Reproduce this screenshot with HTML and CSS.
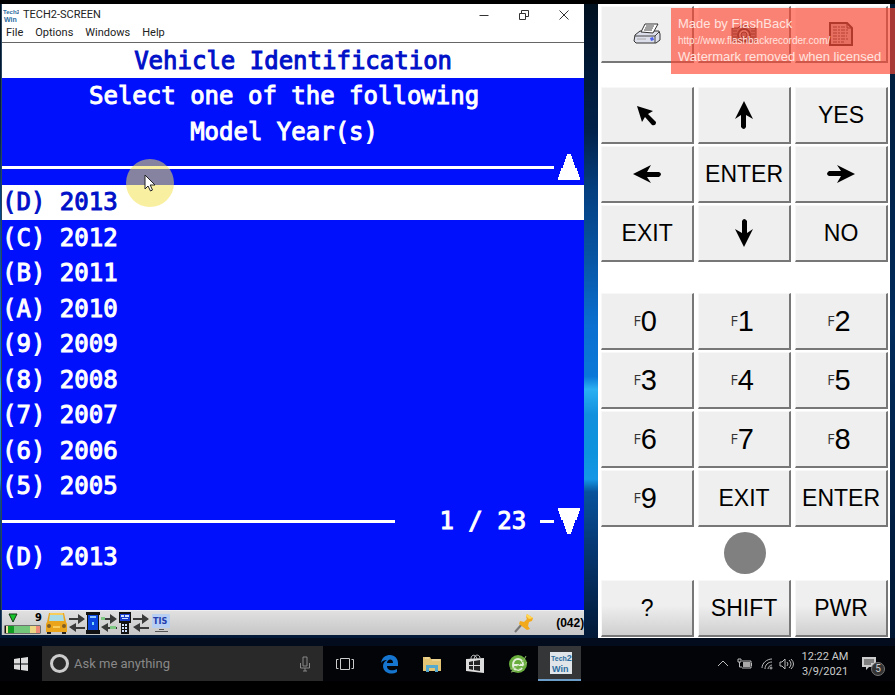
FILE: index.html
```html
<!DOCTYPE html>
<html lang="en">
<head>
<meta charset="utf-8">
<title>TECH2-SCREEN</title>
<link rel="stylesheet" href="styles.css">
</head>
<body>
<main class="desktop">
  <section class="window" aria-label="TECH2-SCREEN">
    <header class="titlebar">
      <svg class="app-icon" viewBox="0 0 16 16" aria-hidden="true"><g class="logo-text"><text x="0" y="7" font-size="6">Tech2</text><text x="1" y="15" font-size="7">Win</text></g></svg>
      <h1>TECH2-SCREEN</h1>
      <div class="window-controls">
        <button type="button" aria-label="Minimize"><svg viewBox="0 0 12 12"><path d="M1.500 6.500h9"/></svg></button>
        <button type="button" aria-label="Restore"><svg viewBox="0 0 12 12"><path d="M1.500 4.500h6v6h-6zM3.500 4v-2.500h7v6h-3"/></svg></button>
        <button type="button" aria-label="Close"><svg viewBox="0 0 12 12"><path d="M1.500 1.500l9 9M10.500 1.500l-9 9"/></svg></button>
      </div>
    </header>
    <nav class="menubar">
      <button type="button">File</button><button type="button">Options</button><button type="button">Windows</button><button type="button">Help</button>
    </nav>
    <div class="screen">
      <h2 class="row heading">Vehicle Identification</h2>
      <p class="row prompt">Select one of the following</p>
      <p class="row prompt">Model Year(s)</p>
      <div class="row rule">
        <span class="line"></span>
        <button type="button" class="scroll" aria-label="Scroll up"><svg viewBox="0 0 22 26"><path d="M9 0h4v2h1v3h1v3h1v3h1v3h2v3h1v3h1v3h1v3H0v-3h1v-3h1v-3h1v-3h2v-3h1V8h1V5h1V2h1z"/></svg></button>
      </div>
      <button type="button" class="row item selected">(D) 2013</button>
      <button type="button" class="row item">(C) 2012</button>
      <button type="button" class="row item">(B) 2011</button>
      <button type="button" class="row item">(A) 2010</button>
      <button type="button" class="row item">(9) 2009</button>
      <button type="button" class="row item">(8) 2008</button>
      <button type="button" class="row item">(7) 2007</button>
      <button type="button" class="row item">(6) 2006</button>
      <button type="button" class="row item">(5) 2005</button>
      <div class="row rule">
        <span class="line"></span>
        <span class="count">1 / 23</span>
        <span class="dash"></span>
        <button type="button" class="scroll" aria-label="Scroll down"><svg viewBox="0 0 22 26"><path d="M0 0h22v3h-1v3h-1v3h-1v3h-2v3h-1v3h-1v3h-1v3h-1v2H9v-2H8v-3H7v-3H6v-3H5v-3H3V9H2V6H1V3H0z"/></svg></button>
      </div>
      <p class="row item">(D) 2013</p>
      <div class="row"></div>
      <div class="spotlight" aria-hidden="true"><svg viewBox="0 0 12 18"><path d="M1 1v14l3-3 2.500 5 2-1-2.300-5H11z"/></svg></div>
    </div>
    <footer class="status">
      <svg class="meter" viewBox="0 0 38 22" aria-hidden="true">
        <path d="M5 2h8l-4 8z" fill="#16c52c" stroke="#123816"/>
        <text x="31" y="9" font-size="11" font-weight="bold">9</text>
        <path d="M.5 13.500h36v8H.5z" fill="#111"/><path d="M2 14h2v7H2z" fill="#efe4a0"/><path d="M4 14h6v7H4z" fill="#0f9d22"/><path d="M10 14h16v7H10z" fill="#73c77b"/><path d="M26 14h6v7h-6z" fill="#ecd685"/><path d="M32 14h4v7h-4z" fill="#ef8a78"/>
      </svg>
      <svg class="links" viewBox="0 0 126 22" aria-hidden="true">
        <path d="M2 19h4v3H2zM17 19h4v3h-4z" fill="#222"/>
        <path d="M4 1h15l2 9 1 2v8H1v-8l1-2z" fill="#eaa51c"/><path d="M5 2h13l1 7H4z" fill="#a8dbe5"/><path d="M5 1h13v2H5z" fill="#f8cc59"/><circle cx="4" cy="14" r="2" fill="#7e5d26"/><circle cx="19" cy="14" r="2" fill="#7e5d26"/><path d="M8 14h7v2H8z" fill="#f8cd5b"/>
        <path d="M24 6h9V2l7 5-7 5V8h-9zM40 15h-9v-4l-7 4 7 5v-3h9zM56 6h9V2l7 5-7 5V8h-9zM72 15h-9v-4l-7 4 7 5v-3h9zM88 6h9V2l7 5-7 5V8h-9zM104 15h-9v-4l-7 4 7 5v-3h9z" fill="#3a3a3a"/>
        <path d="M56 5h4v3h-4zM65 14h6v3h-6z" fill="#7fc883"/>
        <path d="M41 0h14v3h-1v15h1v4H41v-4h1V3h-1z" fill="#111"/><path d="M43 3h10v15H43z" fill="#0a45df"/><path d="M45 4h6v2h-6z" fill="#8bc4ff"/><path d="M47 10h2v3h-2z" fill="#7bdbff"/>
        <path d="M74 0h12v11h-2v11h-8V11h-2z" fill="#111"/><path d="M75 2h10v7H75z" fill="#183cce"/><path d="M76 3h3v2h-3zM80 3h4v2h-4zM77 6h6v1h-6zM77 12h2v2h-2zM80 12h2v2h-2zM77 15h2v2h-2zM80 15h2v2h-2zM77 18h2v2h-2zM80 18h2v2h-2z" fill="#cfe0ff"/>
        <rect x="107" y="2" width="18" height="14" rx="1" fill="#b8cff4"/><text x="108" y="12" font-size="9" font-weight="bold" fill="#233dac">TIS</text><path d="M114 17h5v1h-5zM110 19h13v1h-13z" fill="#555"/>
      </svg>
      <svg class="pin" viewBox="0 0 20 20" aria-hidden="true"><path d="M1 19l7-8" stroke="#777" stroke-width="2"/><path d="M13 1l6 4-1 3-3 1-1 4 2 3-3 1-8-6 1-3 4 1 3-3-1-2z" fill="#f3a91c"/><path d="M13 1l6 4-4 1-3-3z" fill="#ffd858"/></svg>
      <span class="code">(042)</span>
    </footer>
  </section>

  <section class="keypad" aria-label="Keypad">
    <div class="keys">
      <button type="button" aria-label="Print"><svg class="tool" viewBox="0 0 28 24"><path d="M2 13l5-4h19l1 3v6l-4 3H3l-2-2z" fill="#dcdfea" stroke="#333"/><path d="M2 14h20l4-4M22 14v7" fill="none" stroke="#444"/><path d="M8 10l4-8h13l-5 9z" fill="#fff" stroke="#333"/><path d="M13 4h8M12 6h8M11 8h8" stroke="#444"/><path d="M4 17h9" stroke="#aaa"/><path d="M17 16l3-1 1 3-3 1z" fill="#4a60ee"/></svg></button>
      <button type="button" aria-label="Capture"><svg class="tool" viewBox="0 0 28 24"><path d="M2 6h6l3-3h7l3 3h5v14H2z" fill="#888" stroke="#222"/><circle cx="14" cy="13" r="6" fill="#bbb" stroke="#222" stroke-width="2"/><circle cx="14" cy="13" r="3" fill="#777" stroke="#222"/><path d="M3 9h4M21 9h4M3 12h4M21 12h4M3 15h4M21 15h4" stroke="#222"/></svg></button>
      <button type="button" aria-label="Notes"><svg class="tool" viewBox="0 0 28 24"><path d="M3 1h17l5 5v17H3z" fill="#bbb" stroke="#222" stroke-width="2"/><path d="M20 1v5h5" fill="none" stroke="#222"/><path d="M6 5h12M6 8h15M6 11h15M6 14h14M6 17h15M6 20h11" stroke="#333" stroke-dasharray="4 1 2 1"/></svg></button>
    </div>
    <div class="keys nav-keys">
      <button type="button" aria-label="Back"><svg class="arrow" viewBox="0 0 28 28"><path d="M4 5l16 5-5 3 8 8q0 4-4 3l-7-8-3 5z"/></svg></button>
      <button type="button" aria-label="Up"><svg class="arrow" viewBox="0 0 28 28"><path d="M14 0l9 18-7-4v12q-2 4-5 0V14l-6 4z"/></svg></button>
      <button type="button">YES</button>
      <button type="button" aria-label="Left"><svg class="arrow left" viewBox="0 0 28 28"><path d="M14 0l9 18-7-4v12q-2 4-5 0V14l-6 4z"/></svg></button>
      <button type="button">ENTER</button>
      <button type="button" aria-label="Right"><svg class="arrow right" viewBox="0 0 28 28"><path d="M14 0l9 18-7-4v12q-2 4-5 0V14l-6 4z"/></svg></button>
      <button type="button">EXIT</button>
      <button type="button" aria-label="Down"><svg class="arrow down" viewBox="0 0 28 28"><path d="M14 0l9 18-7-4v12q-2 4-5 0V14l-6 4z"/></svg></button>
      <button type="button">NO</button>
    </div>
    <div class="keys function-keys">
      <button type="button"><small>F</small><b>0</b></button><button type="button"><small>F</small><b>1</b></button><button type="button"><small>F</small><b>2</b></button>
      <button type="button"><small>F</small><b>3</b></button><button type="button"><small>F</small><b>4</b></button><button type="button"><small>F</small><b>5</b></button>
      <button type="button"><small>F</small><b>6</b></button><button type="button"><small>F</small><b>7</b></button><button type="button"><small>F</small><b>8</b></button>
      <button type="button"><small>F</small><b>9</b></button><button type="button">EXIT</button><button type="button">ENTER</button>
    </div>
    <div class="lamp"></div>
    <div class="keys bottom-keys">
      <button type="button">?</button><button type="button">SHIFT</button><button type="button">PWR</button>
    </div>
  </section>
</main>

<footer class="taskbar">
  <button type="button" class="start" aria-label="Start"><svg viewBox="0 0 14 14"><path d="M0 2l6-1v5.500H0zM7 1l7-1v6.500H7zM0 7.500h6V13l-6-1zM7 7.500h7V14l-7-1z" fill="#ddd"/></svg></button>
  <div class="search">
    <span class="ring"></span>
    <input type="text" placeholder="Ask me anything" aria-label="Ask me anything">
    <svg viewBox="0 0 12 16" aria-hidden="true"><path d="M4 1h4v9H4zM1.500 7v5h9V7M6 12v3M4 15h4" fill="none" stroke="#888"/></svg>
  </div>
  <button type="button" class="task" aria-label="Task view"><svg viewBox="0 0 20 20"><path d="M5.500 4.500h9v11h-9zM3.500 5.500h-2v9h2M16.500 5.500h2v9h-2" fill="none" stroke="#ccc"/></svg></button>
  <button type="button" class="task" aria-label="Edge"><svg viewBox="0 0 20 20"><path d="M2 9C3 3 7 1 11 1c5 0 8 4 8 8v3H8c0 5 6 5 10 3v3c-7 4-14 0-14-6 0-3 2-5 4-6-3 0-5 1-6 3zM8 9h6c0-5-6-4-6 0z" fill="#1676cf"/></svg></button>
  <button type="button" class="task" aria-label="File Explorer"><svg viewBox="0 0 20 20"><path d="M1 3h7l1 2h10v12H1z" fill="#e3c475"/><path d="M3 4h4M10 6h8" stroke="#f4e4ad"/><path d="M4 11h12v7h-3v-4H7v4H4z" fill="#54a9ce"/></svg></button>
  <button type="button" class="task" aria-label="Store"><svg viewBox="0 0 20 20"><path d="M1 5l18-1v15L1 17z" fill="#ddd"/><path d="M6 5c0-5 5-5 6 0M9 5c1-6 6-4 6-1" fill="none" stroke="#ccc"/><path d="M4 8l4-1v4H4zM9 7l6-1v5H9zM4 12h4v4l-4-1zM9 12h6v5l-6-1z" fill="#222"/></svg></button>
  <button type="button" class="task" aria-label="Browser"><svg viewBox="0 0 20 20"><circle cx="10" cy="10" r="9" fill="#69ad3e"/><path d="M5 11h10c0-8-10-8-10 0 0 6 7 6 9 3" fill="none" stroke="#e4efdb" stroke-width="2"/><path d="M2 15C7 15 15 9 18 2M3 18c5-1 12-4 16-10" fill="none" stroke="#94c36f"/></svg></button>
  <button type="button" class="task active" aria-label="Tech2Win"><svg viewBox="0 0 22 22"><path d="M0 0h22v22H0z" fill="#dfe5e9"/><g class="logo-text"><text x="1" y="9" font-size="7">Tech<tspan font-size="9">2</tspan></text><text x="2" y="20" font-size="9">Win</text></g></svg></button>
  <div class="tray">
    <svg class="chevron" viewBox="0 0 12 12"><path d="M1 8l5-5 5 5"/></svg>
    <svg class="battery" viewBox="0 0 16 12"><path d="M5 3h9v7H5M14.500 5v3M1 1h3v3H1zM2.500 4v5H5"/><path d="M6 4h7v5H6z" fill="#aaa" stroke="none"/></svg>
    <svg class="wifi" viewBox="0 0 12 12"><path d="M1 10C1 5 6 1 11 1M4 11c0-4 3-7 7-7M7 11c0-2 2-4 4-4"/><circle cx="10" cy="10" r="1"/></svg>
    <svg class="sound" viewBox="0 0 16 12"><path d="M1 4h2l3-3v10L3 8H1zM8 4q2 2 0 4M10 2q4 4 0 8M12 1q5 5 0 10"/></svg>
    <time class="clock">12:22 AM<br>3/9/2021</time>
    <button type="button" class="notices" aria-label="5 notifications"><svg viewBox="0 0 16 16"><path d="M1 1h14v10h-7l-3 3v-3H1z" fill="#ccc"/><path d="M3 4h10M3 6h10M3 8h7" stroke="#333"/></svg><span>5</span></button>
  </div>
</footer>

<aside class="watermark">
  <p>Made by FlashBack</p>
  <p class="address">http://www.flashbackrecorder.com/</p>
  <p>Watermark removed when licensed</p>
</aside>
</body>
</html>
```
FILE: styles.css
```css
* { box-sizing: border-box; }

body {
  position: relative;
  display: flex;
  flex-direction: column;
  min-height: 100vh;
  margin: 0;
  padding: 4px 0 15px;
  background: #000;
  font-family: Roboto, "Noto Sans", sans-serif;
  overflow: hidden;
}

h1, h2, p { margin: 0; font-weight: normal; }

button {
  margin: 0;
  padding: 0;
  border: 0;
  background: none;
  color: inherit;
  font: inherit;
}

svg { display: block; }

.desktop {
  flex: 1;
  display: flex;
  gap: 14px;
  padding: 0 5px 8px 1px;
  background:
    linear-gradient(#020c1c, #020c1c) 0 100% / 100% 8px no-repeat,
    linear-gradient(#00101f 0, #02224c 20%, #043f80 29%, #0756a5 40%, #0a6fd0 50%, #0a78d8 58%, #2bb0f2 60%, #1190dd 64%, #0d93de 70%, #1597e5 74%, #07539c 76%, #063975 84%, #021631 100%) 0 0 / 67% 100% no-repeat,
    linear-gradient(#001a35, #002b5c 50%, #001632);
}

.window {
  display: flex;
  flex-direction: column;
  width: 65.6%;
  margin-bottom: 3px;
  border-left: 1px solid #28435c;
  background: #fff;
}

.titlebar {
  display: flex;
  align-items: center;
  height: 21px;
  padding-left: 1px;
}

.app-icon { width: 16px; height: 16px; }
.logo-text { fill: #2b6c9f; font-family: "Liberation Sans", sans-serif; font-weight: bold; }

.titlebar h1 {
  flex: 1;
  padding-left: 4px;
  font-size: 11px;
  color: #222;
}

.window-controls { display: flex; }
.window-controls button { display: grid; place-items: center; width: 40px; height: 20px; }
.window-controls svg { width: 12px; height: 12px; fill: none; stroke: #333; }

.menubar {
  display: flex;
  gap: 12px;
  height: 18px;
  padding-left: 4px;
  border-bottom: 1px solid #666;
  font-size: 11px;
  line-height: 14px;
  color: #222;
}

.menubar button { height: 16px; }

.screen {
  position: relative;
  flex: 1;
  display: grid;
  grid-template-rows: repeat(16, 1fr);
  background: #0010fc;
  color: #fff;
  font: 24px/32px "DejaVu Sans Mono", monospace;
  -webkit-text-stroke: 1px currentColor;
}

.row { display: flex; align-items: center; white-space: pre; }
.heading { justify-content: center; background: #fff; color: #0010c8; font-size: 24px; }
.prompt { justify-content: center; padding-right: 18px; }
.selected { background: #fff; color: #0010c8; }

.rule { gap: 4px; padding: 0 4px 0 0; }
.rule .line { flex: 1; height: 3px; background: #fff; }
.rule .count { padding: 0 10px 0 40px; }
.rule .dash { width: 14px; height: 3px; background: #fff; }
.scroll svg { width: 22px; height: 26px; fill: #fff; }

.spotlight {
  position: absolute;
  left: 124px;
  top: 116px;
  display: grid;
  place-items: center;
  width: 48px;
  height: 48px;
  border-radius: 50%;
  background: rgba(244, 226, 84, 0.55);
}

.spotlight svg { width: 12px; height: 18px; fill: #fff; stroke: #222; }

.status {
  display: flex;
  align-items: center;
  height: 25px;
  padding-left: 2px;
  border-top: 1px solid #eee;
  background: linear-gradient(#e0e0e0, #c6c6c6);
  font-family: "DejaVu Sans Condensed", sans-serif;
}

.meter { width: 38px; height: 22px; }
.links { width: 126px; height: 22px; margin-left: 3px; }
.pin { width: 20px; height: 20px; margin-left: auto; }
.code { padding-left: 22px; font: bold 12px/20px "Liberation Sans", sans-serif; }

.keypad {
  flex: 1;
  padding: 2px 2px 1px 3px;
  background: #fff;
}

.keys {
  display: grid;
  grid-template-columns: repeat(3, 1fr);
  gap: 2px 4px;
}

.keys button {
  display: flex;
  align-items: center;
  justify-content: center;
  height: 57px;
  border: solid;
  border-width: 1px 2px 2px 1px;
  border-color: #f8f8f8 #777 #777 #f8f8f8;
  background: #efefef;
  color: #000;
  font: 23px/28px "Liberation Sans", sans-serif;
}

.nav-keys { margin-top: 24px; }
.function-keys { margin-top: 31px; }
.keys .tool { width: 28px; height: 24px; }
.arrow { width: 28px; height: 28px; }
.left { transform: rotate(-90deg); }
.right { transform: rotate(90deg); }
.down { transform: rotate(180deg); }

.keys small { font: 14px/20px "Open Sans", sans-serif; color: #333; }
.keys b { padding-right: 4px; font: 29px/32px "Liberation Sans", sans-serif; }

.lamp {
  width: 42px;
  height: 42px;
  margin: 5px auto 6px;
  border-radius: 50%;
  background: #808080;
}

.bottom-keys button { background: linear-gradient(#efefef 45%, #cfcfcf); }

.taskbar {
  display: flex;
  align-items: stretch;
  height: 35px;
  background: #020407;
  color: #ccc;
}

.start { display: grid; place-items: center; width: 42px; }
.start svg { width: 14px; height: 14px; }

.search {
  flex: 1;
  display: flex;
  align-items: center;
  max-width: 281px;
  padding: 0 12px 0 8px;
  background: #292929;
}

.ring { width: 19px; height: 19px; border: 3px solid #ccc; border-radius: 50%; }

.search input {
  flex: 1;
  min-width: 0;
  padding: 0 5px;
  border: 0;
  background: none;
  color: #ddd;
  font: 13px/20px Roboto, sans-serif;
}

.search input::placeholder { color: #888; }
.search svg { width: 12px; height: 16px; }

.task { display: grid; place-items: center; width: 43px; }
.task:nth-of-type(n + 3) svg { margin-left: 2px; }
.task svg { width: 20px; height: 20px; }
.task.active { border-bottom: 2px solid #6c9cc8; background: #343638; }
.task.active svg { width: 22px; height: 22px; }

.tray {
  display: flex;
  align-items: center;
  margin-left: auto;
  padding-right: 10px;
}

.tray > svg { fill: none; stroke: #bbb; }
.chevron, .wifi { width: 12px; height: 12px; }
.battery, .sound { width: 16px; height: 12px; }
.battery { margin: 0 8px; }
.sound { margin: 0 6px; }

.clock { width: 48px; font-size: 11px; line-height: 15px; text-align: center; white-space: nowrap; }

.notices { position: relative; width: 24px; height: 24px; margin-left: 12px; }
.notices svg { width: 16px; height: 16px; }
.notices span {
  position: absolute;
  right: 0;
  bottom: 0;
  width: 14px;
  height: 14px;
  border: 1px solid #777;
  border-radius: 50%;
  background: #333;
  font-size: 10px;
  line-height: 12px;
  text-align: center;
}

.watermark {
  position: absolute;
  top: 8px;
  right: 0;
  width: 224px;
  height: 66px;
  padding: 7px 7px;
  background: rgba(255, 70, 50, 0.65);
  color: #ffe3df;
  font: 13px/18px "Liberation Sans", sans-serif;
  white-space: nowrap;
}

.watermark .address { font-size: 10px; line-height: 15px; }
```
